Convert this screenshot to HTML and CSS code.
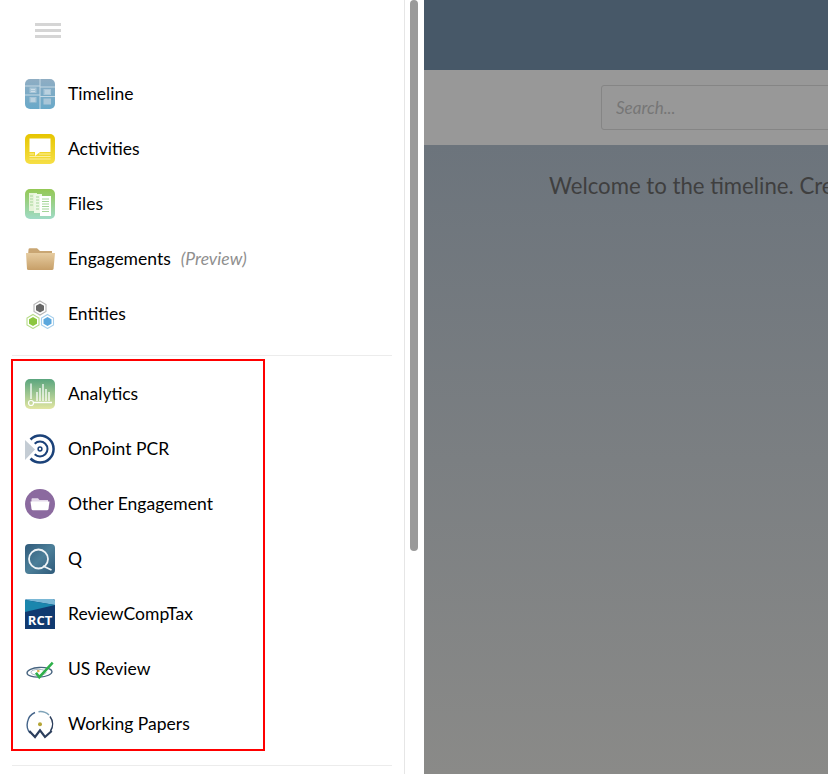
FILE: index.html
```html
<!DOCTYPE html>
<html lang="en">
<head>
    <meta charset="UTF-8">
    <meta name="viewport" content="width=device-width, initial-scale=1.0">
    <title>Timeline</title>
    <link rel="stylesheet" href="styles.css">
</head>
<body>

    <div class="sidebar">
        <div class="menu-btn">
            <span></span>
            <span></span>
            <span></span>
        </div>

        <div class="nav-group">
            <a class="nav-item">
                <svg class="icon" viewBox="0 0 30 30">
                    <defs><linearGradient id="tl" x1="0" y1="0" x2="0" y2="1"><stop offset="0" stop-color="#8fadc3"/><stop offset="1" stop-color="#69a9c9"/></linearGradient></defs>
                    <rect width="30" height="30" rx="5" fill="url(#tl)"/>
                    <path d="M4.500 8.500H11.500V14H4.500ZM18.500 10H26V16H18.500ZM4.500 18H11.500V23.500H4.500ZM18.500 19.500H26V25.500H18.500Z" fill="#a9c6d8"/>
                    <path d="M6 10.500H10M6 12.500H10M20 12H25M20 14H25M6 20H10M6 22H10" stroke="#d6e3ec" stroke-width=".8"/>
                    <path d="M15 0V30M0 7H15M15 8H30M0 16H15M15 17.500H30" stroke="#c6d9e4" stroke-width="1" fill="none"/>
                </svg>
                <span>Timeline</span>
            </a>
            <a class="nav-item">
                <svg class="icon" viewBox="0 0 30 30">
                    <defs><linearGradient id="ac" x1="0" y1="0" x2="0" y2="1"><stop offset="0" stop-color="#e6c500"/><stop offset="1" stop-color="#f6df45"/></linearGradient></defs>
                    <rect width="30" height="30" rx="5" fill="url(#ac)"/>
                    <path d="M4.500 4.500H25.500V18H15L10 22V18H4.500Z" fill="#fff"/>
                    <path d="M4.500 20H9M14 20H25.500M4.500 22.500H25.500M4.500 25H25.500" stroke="#fbf0a0" stroke-width="1.200"/>
                </svg>
                <span>Activities</span>
            </a>
            <a class="nav-item">
                <svg class="icon" viewBox="0 0 30 30">
                    <defs><linearGradient id="fl" x1="0" y1="0" x2="0" y2="1"><stop offset="0" stop-color="#94c854"/><stop offset="1" stop-color="#9fdbc6"/></linearGradient></defs>
                    <rect width="30" height="30" rx="5" fill="url(#fl)"/>
                    <path d="M4 4H12V22H4Z" fill="#e6f4d8"/>
                    <path d="M9 5H17V24H9Z" fill="#eef8e6"/>
                    <path d="M15 7H26V27H15Z" fill="#fff"/>
                    <path d="M17 10H24M17 12.500H24M17 15H24M17 17.500H24M17 20H24M17 22.500H24M5 7H8M5 10H8M5 13H8M5 16H8M11 8H14M11 11H14M11 14H14M11 17H14M11 20H14" stroke="#a6d69a" stroke-width="1"/>
                </svg>
                <span>Files</span>
            </a>
            <a class="nav-item">
                <svg class="icon" viewBox="0 0 30 30">
                    <defs><linearGradient id="fd" x1="0" y1="0" x2="0" y2="1"><stop offset="0" stop-color="#e6cca0"/><stop offset="1" stop-color="#c79f68"/></linearGradient></defs>
                    <path d="M3.500 5.500Q3.500 4.300 5 4.300H12L15 7H27V12H3Z" fill="#c9a673"/>
                    <path d="M1 9H30L28.500 25Q28.300 26 27 26H3.500Q2.200 26 2 25Z" fill="url(#fd)"/>
                </svg>
                <span>Engagements</span>
                <em class="preview">(Preview)</em>
            </a>
            <a class="nav-item">
                <svg class="icon" viewBox="0 0 30 30">
                    <path d="M15 2L21 5.500V12.500L15 16L9 12.500V5.500Z" fill="#fff" stroke="#b5b5b5" stroke-width="1.100"/>
                    <path d="M15 4.500L19 6.800V11.200L15 13.500L11 11.200V6.800Z" fill="#666"/>
                    <path d="M8 15.500L14 19V26L8 29.500L2 26V19Z" fill="#fff" stroke="#b7dc8a" stroke-width="1.100"/>
                    <path d="M8 18L12 20.300V24.700L8 27L4 24.700V20.300Z" fill="#8cc63f"/>
                    <path d="M22.500 15.500L28.500 19V26L22.500 29.500L16.500 26V19Z" fill="#fff" stroke="#a6cfec" stroke-width="1.100"/>
                    <path d="M22.500 18L26.500 20.300V24.700L22.500 27L18.500 24.700V20.300Z" fill="#5ba7dd"/>
                </svg>
                <span>Entities</span>
            </a>
        </div>

        <div class="divider"></div>

        <div class="nav-group">
            <a class="nav-item">
                <svg class="icon" viewBox="0 0 30 30">
                    <defs><linearGradient id="an" x1="0" y1="0" x2="0" y2="1"><stop offset="0" stop-color="#5aa57e"/><stop offset="1" stop-color="#e2e6a2"/></linearGradient></defs>
                    <rect width="30" height="30" rx="5" fill="url(#an)"/>
                    <path d="M6 4.500V20M12 13V22M15 9V22M18 5V22M21 10V22M24 13V22" stroke="#fff" stroke-opacity=".85" stroke-width="1.500" fill="none"/>
                    <path d="M9 23.500H27" stroke="#fff" stroke-width="1.500"/>
                    <circle cx="6" cy="24" r="2.500" fill="none" stroke="#fff" stroke-width="1.200"/>
                </svg>
                <span>Analytics</span>
            </a>
            <a class="nav-item">
                <svg class="icon" viewBox="0 0 30 30">
                    <path d="M0 6L10 15.500L0 26Z" fill="#c4ccd4"/>
                    <path d="M5.500 5.500A13.500 13.500 0 1 1 5.500 24.500" fill="none" stroke="#1b4279" stroke-width="2.500"/>
                    <path d="M9.700 9.700A7.500 7.500 0 1 1 9.700 20.300" fill="none" stroke="#1b4279" stroke-width="2"/>
                    <circle cx="15" cy="15" r="1.900" fill="none" stroke="#1b4279" stroke-width="1.500"/>
                </svg>
                <span>OnPoint PCR</span>
            </a>
            <a class="nav-item">
                <svg class="icon" viewBox="0 0 30 30">
                    <circle cx="15" cy="15" r="15" fill="#8b6a9f"/>
                    <path d="M7 9.300H13L14.500 11H23V13H6.500V10Z" fill="#e3d9e9"/>
                    <path d="M5.500 12.500H24.500L23.500 20Q23.300 21.200 22 21.200H8Q6.700 21.200 6.500 20Z" fill="#fff"/>
                </svg>
                <span>Other Engagement</span>
            </a>
            <a class="nav-item">
                <svg class="icon" viewBox="0 0 30 30">
                    <defs><linearGradient id="qq" x1="0" y1="0" x2="1" y2="1"><stop offset="0" stop-color="#2f5a7a"/><stop offset=".5" stop-color="#4c7f99"/><stop offset="1" stop-color="#2f5a7a"/></linearGradient></defs>
                    <rect width="30" height="30" rx="4" fill="url(#qq)"/>
                    <circle cx="13.500" cy="15" r="9.500" fill="none" stroke="#eef3f6" stroke-width="1.800"/>
                    <path d="M18 22L26.500 26" stroke="#eef3f6" stroke-width="1.800"/>
                </svg>
                <span>Q</span>
            </a>
            <a class="nav-item">
                <svg class="icon" viewBox="0 0 30 30">
                    <path d="M0 2Q0 0 2 0H28Q30 0 30 2V30H0Z" fill="#103a70"/>
                    <path d="M0 2Q0 0 2 0H28Q30 0 30 2V6L0 1Z" fill="#7ab8d6"/>
                    <path d="M0 1L30 6L0 13Z" fill="#1a86ad"/>
                    <text x="15" y="26" class="rct">RCT</text>
                </svg>
                <span>ReviewCompTax</span>
            </a>
            <a class="nav-item">
                <svg class="icon" viewBox="0 0 30 30">
                    <ellipse cx="14.500" cy="18.300" rx="12.500" ry="4.800" fill="none" stroke="#46637f" stroke-width="1.300" transform="rotate(-3 14.500 18.300)"/>
                    <ellipse cx="13.500" cy="18.300" rx="7.500" ry="3" fill="none" stroke="#8da3b5" stroke-width=".8"/>
                    <circle cx="13.300" cy="17" r="1.300" fill="#e0b050"/>
                    <path d="M11 18.700L14.300 23.200L27.700 8.700" fill="none" stroke="#2eb04a" stroke-width="2.500"/>
                </svg>
                <span>US Review</span>
            </a>
            <a class="nav-item">
                <svg class="icon" viewBox="0 0 30 30">
                    <path d="M5 24A12.700 12.700 0 0 1 2.500 13A12.700 12.700 0 0 1 10 3.500" fill="none" stroke="#44648a" stroke-width="1.400"/>
                    <path d="M13.500 2.700A12.700 12.700 0 0 1 24 6" fill="none" stroke="#7fa3b8" stroke-width="1.400"/>
                    <path d="M25 7.500A12.700 12.700 0 0 1 25.500 22" fill="none" stroke="#2c3e5c" stroke-width="1.500"/>
                    <path d="M4.300 22L10 28L15 21.300L20 28L26.700 22" fill="none" stroke="#2c3e5c" stroke-width="2.200"/>
                    <circle cx="15" cy="15.300" r="2" fill="#b5a536"/>
                </svg>
                <span>Working Papers</span>
            </a>
        </div>

        <div class="divider"></div>

        <!-- annotation drawn over the second group -->
        <div class="highlight"></div>
    </div>

    <div class="scroll-track">
        <div class="scroll-thumb"></div>
    </div>

    <div class="main">
        <div class="top-bar"></div>
        <div class="search-bar">
            <input class="search-input" type="text" placeholder="Search...">
        </div>
        <div class="content">
            <p class="welcome">Welcome to the timeline. Create</p>
        </div>
    </div>

</body>
</html>
```

FILE: styles.css
```css
body {
    font-family: Lato, "Open Sans", sans-serif;
    background-color: white;
    color: black;
    margin: 0;
    height: 774px;
    overflow: hidden;
    display: flex;
}
.sidebar {
    position: relative;
    width: 404px;
    height: 774px;
    flex-shrink: 0;
    border-right: 1px solid #e6e6e6;
    overflow: hidden;
}
.menu-btn {
    width: 26px;
    height: 15px;
    padding: 23px 0 0 35px;
    display: flex;
    flex-direction: column;
    justify-content: space-between;
    margin-bottom: 28px;
}
.menu-btn span {
    display: block;
    height: 3px;
    background: #d5d5d5;
}
.nav-item {
    display: flex;
    align-items: center;
    height: 55px;
    padding-left: 25px;
    font-size: 17.5px;
}
.icon {
    width: 30px;
    height: 30px;
    margin-right: 13px;
    flex-shrink: 0;
}
.rct {
    font-family: "Open Sans", sans-serif;
    font-size: 13px;
    font-weight: 700;
    fill: white;
    text-anchor: middle;
}
.preview {
    margin-left: 10px;
    color: #8f8f8f;
}
.divider {
    height: 1px;
    background: #ececec;
    margin: 14px 12px 10px 12px;
}
.highlight {
    position: absolute;
    left: 11px;
    top: 359px;
    width: 250px;
    height: 388px;
    border: 2px solid #f00;
}
.scroll-track {
    width: 19px;
    flex-shrink: 0;
}
.scroll-thumb {
    width: 8px;
    height: 551px;
    margin-left: 5px;
    background: #9a9a9a;
    border-radius: 4px;
}
.main {
    flex: 1;
    min-width: 0;
    overflow: hidden;
    display: flex;
    flex-direction: column;
}
.top-bar {
    height: 70px;
    background: #475868;
}
.search-bar {
    height: 75px;
    background: #989898;
    padding: 15px 0 0 177px;
    box-sizing: border-box;
}
.search-input {
    width: 400px;
    height: 45px;
    box-sizing: border-box;
    padding: 0 14px;
    border: 1px solid #858585;
    border-radius: 3px;
    background: #989898;
    font-family: Lato, sans-serif;
    font-size: 17px;
    font-style: italic;
}
.search-input::placeholder {
    color: #767676;
    opacity: 1;
}
.content {
    flex: 1;
    background: linear-gradient(#6c747c, #8a8a88);
    padding: 27px 0 0 125px;
}
.welcome {
    margin: 0;
    font-size: 22.2px;
    color: #3f3f3f;
    white-space: nowrap;
}
```
